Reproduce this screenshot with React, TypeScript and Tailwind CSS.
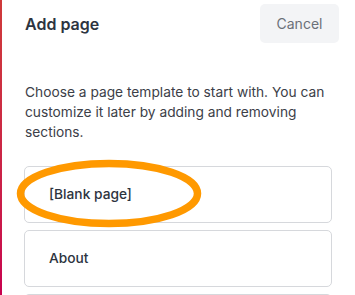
import React from "react";

export default function App() {
  return (
    <div
      className="relative flex w-[355px] h-[295px] overflow-hidden bg-white"
      style={{ fontFamily: "Inter, 'Noto Sans', sans-serif" }}
    >
      <div className="w-[2px] shrink-0 bg-gradient-to-b from-[#cf3a3a] to-[#c8004e]" />
      <div className="flex-1 flex flex-col">
        <div className="flex items-start justify-between pl-[23px] pr-[16px] pt-[4px]">
          <div className="mt-[9px] text-[16px] font-semibold text-[#2d3440] leading-[22px]">Add page</div>
          <button className="h-[39px] w-[79px] rounded-[5px] bg-[#f3f4f6] text-[14px] text-[#6b7079]">
            Cancel
          </button>
        </div>
        <p className="mt-[39px] pl-[23px] pr-[20px] text-[13.75px] leading-[20px] text-[#3c4048]">
          Choose a page template to start with. You can customize it later by adding and removing sections.
        </p>
        <div className="mt-[24px] ml-[22px] w-[308px] flex flex-col gap-[7px]">
          {["[Blank page]", "About", ""].map((t, i) => (
            <div
              key={i}
              className="h-[57px] shrink-0 rounded-[5px] border border-[#d6d8dc] flex items-center pl-[24px] text-[13.75px] font-medium text-[#2d3440]"
            >
              {t}
            </div>
          ))}
        </div>
      </div>
      <svg
        className="absolute left-0 top-0 pointer-events-none"
        width="355"
        height="295"
        viewBox="0 0 355 295"
      >
        <ellipse cx="109" cy="193.5" rx="88.5" ry="30" fill="none" stroke="#ff9900" strokeWidth="7.5" />
      </svg>
    </div>
  );
}
